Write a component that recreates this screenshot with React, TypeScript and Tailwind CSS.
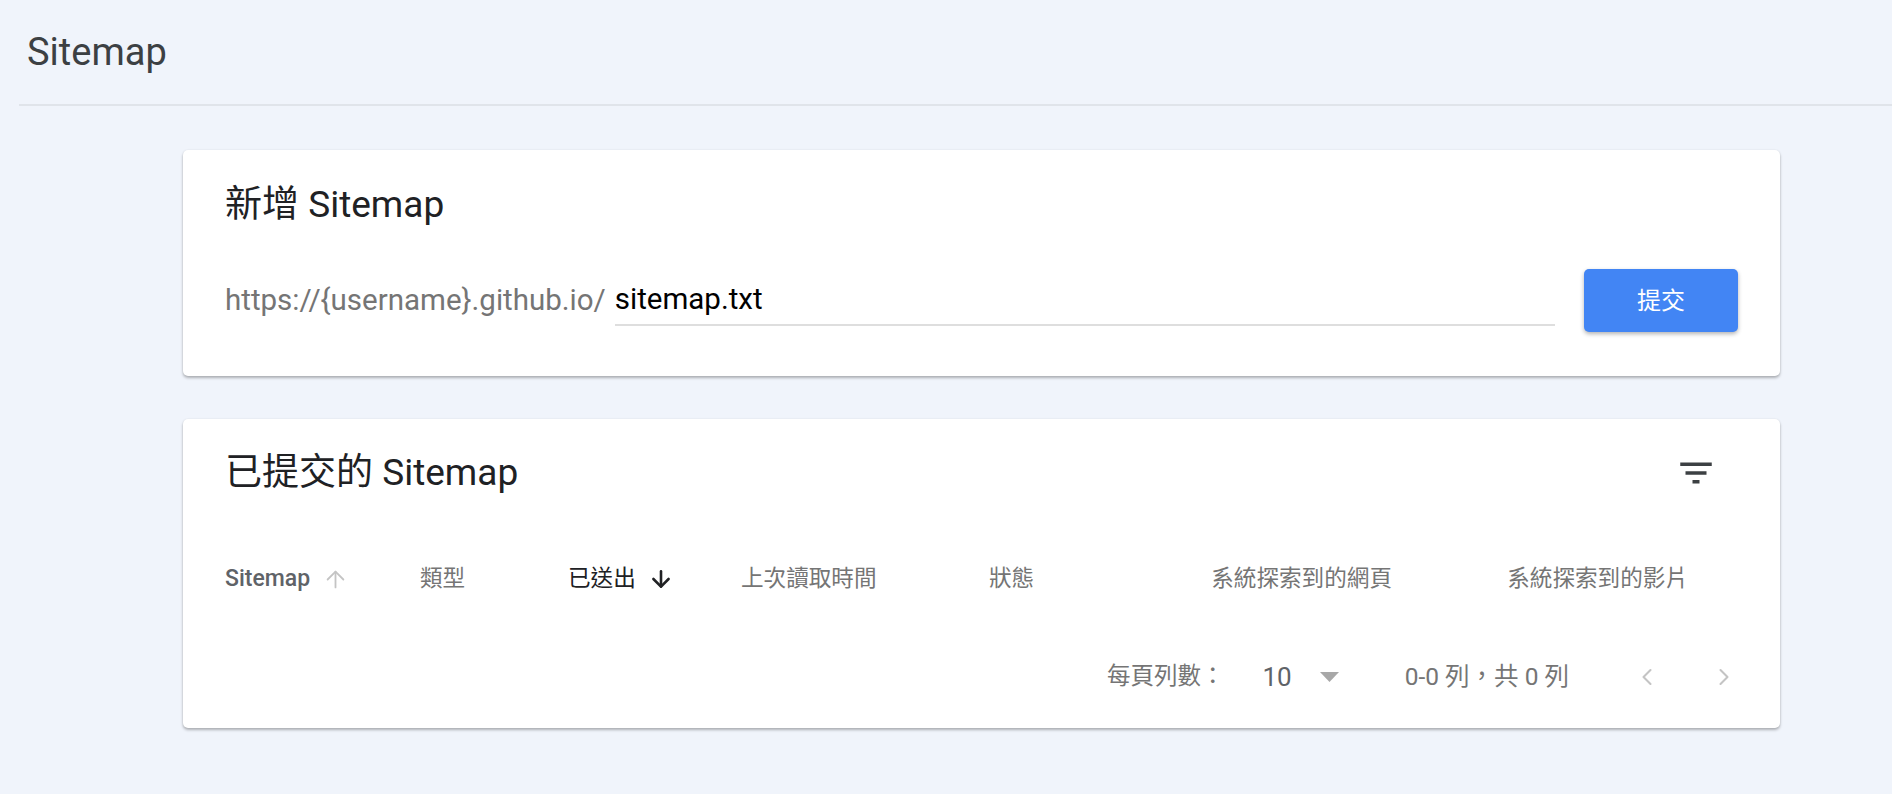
import { ArrowUp, ArrowDown, ChevronLeft, ChevronRight } from "lucide-react";

const font = "font-['Roboto','Noto_Sans_CJK_TC',sans-serif]";

function FilterIcon() {
  return (
    <svg width="42" height="42" viewBox="0 0 24 24" className="fill-[#3c4043]">
      <path d="M10 18h4v-2h-4v2zM3 6v2h18V6H3zm3 7h12v-2H6v2z" />
    </svg>
  );
}

function HeaderCell({
  width,
  align = "left",
  children,
}: {
  width: string;
  align?: "left" | "right";
  children: React.ReactNode;
}) {
  return (
    <div
      className={`${width} flex items-center ${
        align === "right" ? "justify-end pr-[50px]" : ""
      }`}
    >
      {children}
    </div>
  );
}

export default function App() {
  return (
    <div className={`min-h-screen bg-[#f0f4fb] ${font}`}>
      {/* Page header */}
      <div className="ml-[19px] h-[106px] border-b-2 border-[#e0e4ea] flex items-center pl-[8px]">
        <h1 className="text-[38px] text-[#3c4043] leading-none">Sitemap</h1>
      </div>

      <div className="pl-[183px] pr-[112px] pt-[44px] flex flex-col gap-[43px]">
        {/* Add sitemap */}
        <div className="bg-white rounded-[5px] shadow-[0_2px_3px_rgba(0,0,0,0.28),0_0_2px_rgba(0,0,0,0.08)] px-[42px] pt-[33px] pb-[44px]">
          <h2 className="text-[37px] leading-[44px] text-[#202124]">新增 Sitemap</h2>
          <div className="mt-[42px] h-[63px] flex items-center">
            <span className="text-[29.5px] text-[#757575] whitespace-nowrap">
              https://{"{username}"}.github.io/
            </span>
            <div className="flex-1 ml-[9px] h-[50px] border-b-2 border-[#dedede] flex items-center">
              <span className="text-[29.5px] text-black">sitemap.txt</span>
            </div>
            <button className="ml-[29px] w-[154px] h-[63px] rounded-[5px] bg-[#4285f4] text-white text-[24px] shadow-[0_2px_4px_rgba(0,0,0,0.3)]">
              提交
            </button>
          </div>
        </div>

        {/* Submitted sitemaps */}
        <div className="bg-white rounded-[5px] shadow-[0_2px_3px_rgba(0,0,0,0.28),0_0_2px_rgba(0,0,0,0.08)] px-[42px] pt-[32px]">
          <div className="h-[44px] flex items-center justify-between">
            <h2 className="text-[37px] leading-[44px] text-[#202124]">已提交的 Sitemap</h2>
            <div className="w-[84px] h-[44px] flex items-center justify-center">
              <FilterIcon />
            </div>
          </div>

          <div className="mt-[42px] h-[84px] flex text-[22.6px] text-[#757575]">
            <HeaderCell width="w-[195px]">
              <span className="text-[23px] font-medium text-[#5f6368]">Sitemap</span>
              <ArrowUp className="ml-[12px] w-[27px] h-[27px] text-[#c4c4c4]" strokeWidth={1.6} />
            </HeaderCell>
            <HeaderCell width="w-[148px]">類型</HeaderCell>
            <HeaderCell width="w-[173px]">
              <span className="text-[#202124]">已送出</span>
              <ArrowDown className="ml-[12px] w-[26px] h-[26px] text-[#202124]" strokeWidth={2.4} />
            </HeaderCell>
            <HeaderCell width="w-[248px]">上次讀取時間</HeaderCell>
            <HeaderCell width="w-[222px]">狀態</HeaderCell>
            <HeaderCell width="w-[231px]" align="right">系統探索到的網頁</HeaderCell>
            <HeaderCell width="flex-1" align="right">系統探索到的影片</HeaderCell>
          </div>

          <div className="mt-[5px] h-[102px] flex items-center justify-end text-[23.5px] text-[#757575]">
            <span>每頁列數：</span>
            <span className="ml-[38px] text-[26px] text-[#5f6368]">10</span>
            <svg width="19" height="10" viewBox="0 0 19 10" className="ml-[28px] fill-[#a8a8a8]">
              <path d="M0 0h19L9.5 10z" />
            </svg>
            <span className="ml-[66px] text-[24.5px]">0-0 列，共 0 列</span>
            <div className="ml-[64px] w-[28px] flex justify-center">
              <ChevronLeft className="w-[32px] h-[32px] text-[#c4c4c4]" strokeWidth={1.8} />
            </div>
            <div className="ml-[49px] w-[28px] flex justify-center">
              <ChevronRight className="w-[32px] h-[32px] text-[#c4c4c4]" strokeWidth={1.8} />
            </div>
          </div>
        </div>
      </div>
    </div>
  );
}
